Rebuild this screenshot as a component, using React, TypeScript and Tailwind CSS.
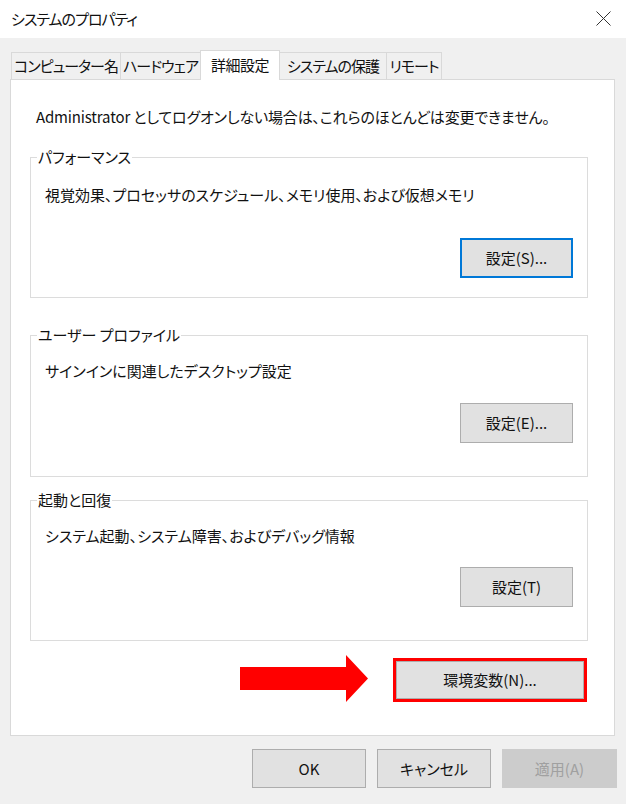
import React from "react";

const tabs = [
  { label: "コンピューター名", w: "w-[110px]", sel: false },
  { label: "ハードウェア", w: "w-[81px]", sel: false },
  { label: "詳細設定", w: "w-[80px]", sel: true },
  { label: "システムの保護", w: "w-[108px]", sel: false },
  { label: "リモート", w: "w-[56px]", sel: false },
];

function WinButton({
  children,
  focused,
  className = "",
}: {
  children: React.ReactNode;
  focused?: boolean;
  className?: string;
}) {
  return (
    <div
      className={
        "flex items-center justify-center bg-[#e1e1e1] text-[15px] leading-[20px] text-[#111] whitespace-nowrap " +
        (focused ? "border-2 border-[#0078d7] " : "border border-[#adadad] ") +
        className
      }
    >
      {children}
    </div>
  );
}

function Group({
  label,
  desc,
  btn,
  focused,
  h,
  pt,
  mt,
}: {
  label: string;
  desc: string;
  btn: string;
  focused?: boolean;
  h: string;
  pt: string;
  mt: string;
}) {
  return (
    <div className={"relative ml-[19px] w-[558px] border border-[#dcdcdc] flex flex-col pl-[14px] pr-[14px] " + h + " " + pt}>
      <div className="absolute left-[6px] -top-[11px] bg-white px-[1px] text-[15px] leading-[20px] text-[#111] whitespace-nowrap">
        {label}
      </div>
      <div className="text-[15px] leading-[20px] text-[#111] whitespace-nowrap">{desc}</div>
      <div className={"flex justify-end " + mt}>
        <WinButton focused={focused} className="w-[113px] h-[40px]">
          {btn}
        </WinButton>
      </div>
    </div>
  );
}

export default function App() {
  return (
    <div className="w-[626px] h-[804px] bg-[#f0f0f0] flex flex-col font-['Noto_Sans_CJK_JP','Noto_Sans',sans-serif] [font-feature-settings:'palt'] text-black">
      {/* Title bar */}
      <div className="h-[38px] bg-white flex items-center justify-between pl-[11px] pr-[15px]">
        <div className="text-[15px] leading-[20px] text-[#111] tracking-[-1px] whitespace-nowrap">システムのプロパティ</div>
        <svg width="15" height="15" viewBox="0 0 15 15" className="mt-[-2px]">
          <path d="M0.5 0.5 L14.5 14.5 M14.5 0.5 L0.5 14.5" stroke="#333" strokeWidth="1" fill="none" />
        </svg>
      </div>

      {/* Body */}
      <div className="flex flex-col px-[10px] pt-[12px]">
        {/* Tabs */}
        <div className="relative z-10 flex items-end h-[30px] pl-[1px]">
          {tabs.map((t) =>
            t.sel ? (
              <div
                key={t.label}
                className={"h-[30px] bg-white border border-b-0 border-[#d9d9d9] flex items-center justify-center pb-[1px] text-[15px] leading-[20px] text-[#111] tracking-[-0.5px] whitespace-nowrap -ml-px " + t.w}
              >
                {t.label}
              </div>
            ) : (
              <div
                key={t.label}
                className={"h-[28px] bg-[#f0f0f0] border border-[#d9d9d9] flex items-center justify-center text-[15px] leading-[20px] text-[#111] tracking-[-1px] whitespace-nowrap -ml-px first:ml-0 " + t.w}
              >
                {t.label}
              </div>
            )
          )}
        </div>

        {/* Panel */}
        <div className="-mt-px h-[657px] w-[605px] bg-white border border-[#d9d9d9] flex flex-col pt-[27px]">
          <div className="pl-[25px] text-[15px] leading-[20px] text-[#111] whitespace-nowrap tracking-[-0.15px]">
            Administrator としてログオンしない場合は、これらのほとんどは変更できません。
          </div>

          <div className="mt-[30px]">
            <Group
              label="パフォーマンス"
              desc="視覚効果、プロセッサのスケジュール、メモリ使用、および仮想メモリ"
              btn="設定(S)..."
              focused
              h="h-[141px]"
              pt="pt-[27px]"
              mt="mt-[33px]"
            />
          </div>
          <div className="mt-[37px]">
            <Group
              label="ユーザー プロファイル"
              desc="サインインに関連したデスクトップ設定"
              btn="設定(E)..."
              h="h-[142px]"
              pt="pt-[25px]"
              mt="mt-[22px]"
            />
          </div>
          <div className="mt-[23px]">
            <Group
              label="起動と回復"
              desc="システム起動、システム障害、およびデバッグ情報"
              btn="設定(T)"
              h="h-[141px]"
              pt="pt-[25px]"
              mt="mt-[21px]"
            />
          </div>

          {/* Environment variables row */}
          <div className="mt-[17px] h-[44px] flex items-center justify-end pr-[27px] gap-[24px]">
            <svg width="129" height="48" viewBox="0 0 129 48" className="mt-[-2px]">
              <path d="M0 12 H106 V0 L128 23.5 L106 47 V35 H0 Z" fill="#ff0000" />
            </svg>
            <div className="w-[194px] h-[44px] border-[3px] border-[#ff0000] flex">
              <WinButton className="flex-1">環境変数(N)...</WinButton>
            </div>
          </div>
        </div>
      </div>

      {/* Bottom buttons */}
      <div className="mt-[13px] flex justify-end pr-[9px] gap-[11px]">
        <WinButton className="w-[114px] h-[39px]">OK</WinButton>
        <WinButton className="w-[114px] h-[39px]">キャンセル</WinButton>
        <div className="w-[115px] h-[39px] bg-[#cccccc] border border-[#cccccc] flex items-center justify-center text-[15px] leading-[20px] text-[#a0a0a0]">
          適用(A)
        </div>
      </div>
    </div>
  );
}
